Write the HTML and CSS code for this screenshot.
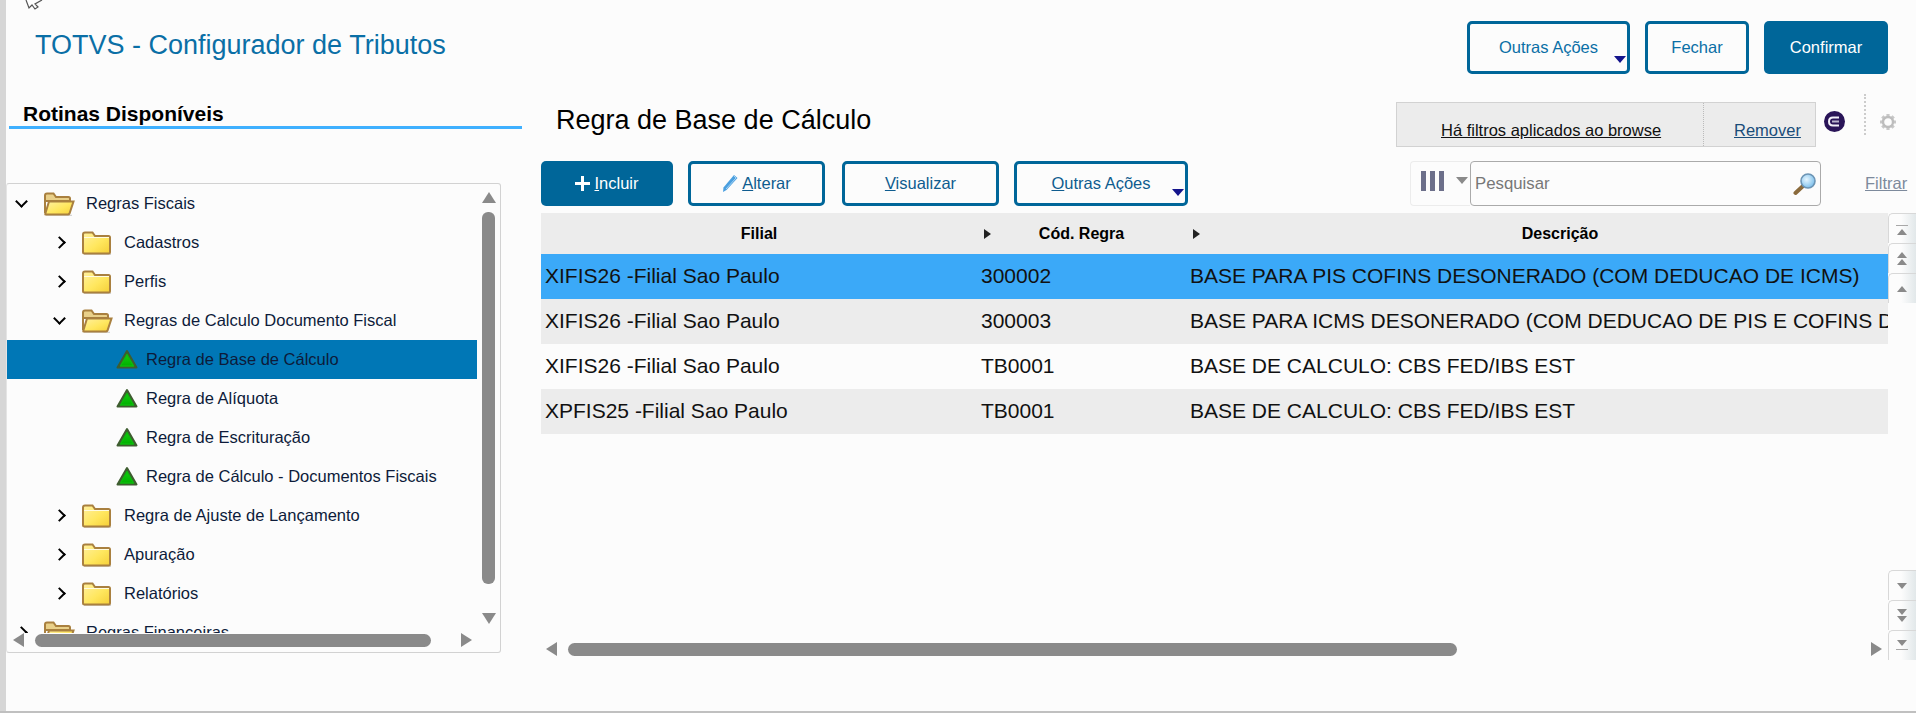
FILE: index.html
```html
<!DOCTYPE html>
<html lang="pt-BR">
<head>
  <meta charset="UTF-8" />
  <title>TOTVS - Configurador de Tributos</title>
  <link rel="stylesheet" href="styles.css">
</head>
<body>
  <svg class="defs" width="0" height="0">
    <defs>
      <linearGradient id="folderFill" x1="0" y1="0" x2="1" y2="1">
        <stop offset="0" stop-color="#fff0a0"/>
        <stop offset="0.55" stop-color="#ffe75e"/>
        <stop offset="1" stop-color="#f5cf38"/>
      </linearGradient>
      <linearGradient id="greenFill" x1="0" y1="0" x2="0" y2="1">
        <stop offset="0" stop-color="#14cc10"/>
        <stop offset="1" stop-color="#00b000"/>
      </linearGradient>
      <radialGradient id="lensFill" cx="0.4" cy="0.4" r="0.7">
        <stop offset="0" stop-color="#e6f6ff"/>
        <stop offset="1" stop-color="#6fb8e8"/>
      </radialGradient>
      <symbol id="folderClosed" viewBox="0 0 32 24">
        <path d="M3 23.500h27" stroke="#d4d4d4" stroke-width="1.500"/>
        <path d="M2 6V3.500Q2 1.500 4 1.500h7.500L14 5h13.500Q29 5 29 6.500V21Q29 22.500 27.500 22.500H3.500Q2 22.500 2 21Z" fill="url(#folderFill)" stroke="#a9803f" stroke-width="2"/>
        <path d="M3 6.500h25" stroke="#fffbe0" stroke-width="1"/>
      </symbol>
      <symbol id="folderOpen" viewBox="0 0 32 24">
        <path d="M3 23.500h26" stroke="#d4d4d4" stroke-width="1.500"/>
        <path d="M2 21V3.500Q2 1.500 4 1.500h6.500L13 5h12.500Q27 5 27 6.500V9H2" fill="#e9d089" stroke="#a9803f" stroke-width="2"/>
        <path d="M6 9.500h24.500L26.500 21.500Q26 22.500 25 22.500H2.500Q2 22.500 2.500 21Z" fill="url(#folderFill)" stroke="#a9803f" stroke-width="2"/>
      </symbol>
      <symbol id="greenTri" viewBox="0 0 22 21">
        <path d="M11 2 20.500 18.500H1.500Z" fill="#3f5d30" stroke="#3f5d30" stroke-width="2" stroke-linejoin="round"/>
        <path d="M11 5.500 17.500 17H4.500Z" fill="url(#greenFill)" stroke="#0cbc0c" stroke-width="1.500" stroke-linejoin="round"/>
      </symbol>
    </defs>
  </svg>

  <svg class="cursor" width="20" height="10" viewBox="0 0 20 10">
    <path d="M1 0 4 8 7 5 10 9 13 7 10 4 17 0" fill="#fff" stroke="#555" stroke-width="1.200"/>
  </svg>

  <div class="app">
    <!-- TOPO -->
    <header class="topbar">
      <h1 class="app-title">TOTVS - Configurador de Tributos</h1>
      <div class="top-actions">
        <button class="btn btn-outline btn-more top-more">Outras Ações<span class="caret"></span></button>
        <button class="btn btn-outline top-close">Fechar</button>
        <button class="btn btn-solid top-ok">Confirmar</button>
      </div>
    </header>

    <div class="content">
      <!-- ROTINAS -->
      <aside class="sidebar">
        <h2 class="side-title">Rotinas Disponíveis</h2>
        <div class="tree">
          <div class="tree-body">
            <ul class="tree-list">
              <li class="node lvl0"><span class="chev chev-down"></span><svg class="folder"><use href="#folderOpen"/></svg>Regras Fiscais</li>
              <li class="node lvl1"><span class="chev"></span><svg class="folder"><use href="#folderClosed"/></svg>Cadastros</li>
              <li class="node lvl1"><span class="chev"></span><svg class="folder"><use href="#folderClosed"/></svg>Perfis</li>
              <li class="node lvl1"><span class="chev chev-down"></span><svg class="folder"><use href="#folderOpen"/></svg>Regras de Calculo Documento Fiscal</li>
              <li class="node lvl2 selected"><svg class="tri"><use href="#greenTri"/></svg>Regra de Base de Cálculo</li>
              <li class="node lvl2"><svg class="tri"><use href="#greenTri"/></svg>Regra de Alíquota</li>
              <li class="node lvl2"><svg class="tri"><use href="#greenTri"/></svg>Regra de Escrituração</li>
              <li class="node lvl2"><svg class="tri"><use href="#greenTri"/></svg>Regra de Cálculo - Documentos Fiscais</li>
              <li class="node lvl1"><span class="chev"></span><svg class="folder"><use href="#folderClosed"/></svg>Regra de Ajuste de Lançamento</li>
              <li class="node lvl1"><span class="chev"></span><svg class="folder"><use href="#folderClosed"/></svg>Apuração</li>
              <li class="node lvl1"><span class="chev"></span><svg class="folder"><use href="#folderClosed"/></svg>Relatórios</li>
              <li class="node lvl0"><span class="chev"></span><svg class="folder"><use href="#folderOpen"/></svg>Regras Financeiras</li>
            </ul>
            <div class="vbar">
              <span class="arr arr-up"></span>
              <span class="vthumb"></span>
              <span class="arr arr-down"></span>
            </div>
          </div>
          <div class="hbar tree-hbar">
            <span class="arr arr-left"></span>
            <span class="hthumb"></span>
            <span class="arr arr-right"></span>
          </div>
        </div>
      </aside>

      <!-- BROWSE -->
      <main class="main">
        <div class="main-head">
          <h2 class="page-title">Regra de Base de Cálculo</h2>
          <div class="filter-info">
            <a class="filter-msg"><span>Há filtros aplicados ao browse</span></a>
            <a class="filter-rem"><span>Remover</span></a>
          </div>
          <svg class="logo-dot" width="21" height="21" viewBox="0 0 21 21">
            <circle cx="10.500" cy="10.500" r="10.500" fill="#2a1558"/>
            <path d="M15 6.500H9Q5 6.500 5 10.500T9 14.500H15" fill="none" stroke="#f2f0f8" stroke-width="2"/>
            <path d="M8 10.500H15" stroke="#b9b4cc" stroke-width="2"/>
          </svg>
          <span class="dots"></span>
          <svg class="gear" width="18" height="18" viewBox="0 0 18 18">
            <path d="M9 1v3M9 14v3M1 9h3M14 9h3M3.300 3.300l2.200 2.200M12.500 12.500l2.200 2.200M14.700 3.300l-2.200 2.200M5.500 12.500l-2.200 2.200" stroke="#c8c8c8" stroke-width="3.200"/>
            <circle cx="9" cy="9" r="5" fill="#fcfcfc" stroke="#bdbdbd" stroke-width="2.400"/>
          </svg>
        </div>

        <div class="toolbar">
          <button class="btn btn-solid tb-add"><span class="plus"></span><span><u>I</u>ncluir</span></button>
          <button class="btn btn-outline tb-edit">
            <svg width="16" height="19" viewBox="0 0 16 19"><path d="M12 1 15.500 4 4.500 16 1 18 1.500 13.500Z" fill="#4a9fdf"/><path d="M12 2 14 4 4 15" fill="none" stroke="#a8d4f4" stroke-width="1"/></svg>
            <span><u>A</u>lterar</span>
          </button>
          <button class="btn btn-outline tb-view"><span><u>V</u>isualizar</span></button>
          <button class="btn btn-outline btn-more tb-more"><span><u>O</u>utras Ações</span><span class="caret"></span></button>

          <div class="searchbar">
            <div class="col-picker">
              <span class="bars"><i></i><i></i><i></i></span>
              <span class="col-caret"></span>
            </div>
            <div class="search">
              <span class="search-ph">Pesquisar</span>
              <svg width="24" height="24" viewBox="0 0 24 24">
                <path d="M10 14 2.500 21" stroke="#8a6a3c" stroke-width="4" stroke-linecap="round"/>
                <circle cx="15" cy="9" r="7" fill="url(#lensFill)" stroke="#6c94b4" stroke-width="1.600"/>
              </svg>
            </div>
            <a class="filter-link">Filtrar</a>
          </div>
        </div>

        <div class="grid-area">
          <div class="grid-wrap">
            <div class="grid-clip">
              <table class="grid">
                <colgroup>
                  <col class="col-a"><col class="col-b"><col class="col-c">
                </colgroup>
                <thead>
                  <tr>
                    <th>Filial</th>
                    <th class="sort">Cód. Regra</th>
                    <th class="sort">Descrição</th>
                  </tr>
                </thead>
                <tbody>
                  <tr class="row-sel">
                    <td>XIFIS26 -Filial Sao Paulo</td>
                    <td>300002</td>
                    <td>BASE PARA PIS COFINS DESONERADO (COM DEDUCAO DE ICMS)</td>
                  </tr>
                  <tr class="row-alt">
                    <td>XIFIS26 -Filial Sao Paulo</td>
                    <td>300003</td>
                    <td>BASE PARA ICMS DESONERADO (COM DEDUCAO DE PIS E COFINS DESONERADO)</td>
                  </tr>
                  <tr>
                    <td>XIFIS26 -Filial Sao Paulo</td>
                    <td>TB0001</td>
                    <td>BASE DE CALCULO: CBS FED/IBS EST</td>
                  </tr>
                  <tr class="row-alt">
                    <td>XPFIS25 -Filial Sao Paulo</td>
                    <td>TB0001</td>
                    <td>BASE DE CALCULO: CBS FED/IBS EST</td>
                  </tr>
                </tbody>
              </table>
            </div>
            <div class="hbar grid-hbar">
              <span class="arr arr-left"></span>
              <span class="hthumb"></span>
              <span class="arr arr-right"></span>
            </div>
          </div>

          <div class="pager">
            <div class="pager-group">
              <div class="page-btn"><span class="line"></span><span class="mini mini-up"></span></div>
              <div class="page-btn"><span class="mini mini-up"></span><span class="mini mini-up"></span></div>
              <div class="page-btn"><span class="mini mini-up"></span></div>
            </div>
            <div class="pager-group">
              <div class="page-btn"><span class="mini mini-down"></span></div>
              <div class="page-btn"><span class="mini mini-down"></span><span class="mini mini-down"></span></div>
              <div class="page-btn"><span class="mini mini-down"></span><span class="line"></span></div>
            </div>
          </div>
        </div>
      </main>
    </div>
  </div>
</body>
</html>
```

FILE: styles.css
```css
* {
  box-sizing: border-box;
}
html, body {
  margin: 0;
  height: 100%;
  overflow: hidden;
}
body {
  font-family: "Liberation Sans", Arial, sans-serif;
  background: #fcfcfc;
  color: #111;
}
.defs {
  position: absolute;
}
.cursor {
  position: absolute;
  left: 25px;
  top: 0;
}
.app {
  height: 711px;
  border-left: 6px solid #d6d6d6;
  display: flex;
  flex-direction: column;
  box-shadow: 0 2px 0 #c0c0c0;
}

/* topo */
.topbar {
  height: 94px;
  display: flex;
  justify-content: space-between;
  padding: 21px 28px 0 29px;
}
.app-title {
  margin: 8px 0 0;
  font-size: 27px;
  font-weight: normal;
  line-height: 32px;
  color: #0a6fa6;
}
.top-actions {
  display: flex;
  gap: 15px;
  height: 53px;
}
.btn {
  position: relative;
  display: flex;
  align-items: center;
  justify-content: center;
  gap: 4px;
  height: 100%;
  padding: 0;
  border-radius: 5px;
  font-family: inherit;
  font-size: 16.500px;
  cursor: pointer;
}
.btn-outline {
  background: #fcfcfc;
  border: 3px solid #006699;
  color: #0a6fa6;
}
.btn-solid {
  background: #006699;
  border: none;
  color: #fff;
}
.top-more { width: 163px; }
.top-close { width: 104px; }
.top-ok { width: 124px; }
.caret {
  position: absolute;
  right: 1px;
  bottom: 8px;
  width: 0;
  height: 0;
  border-left: 6px solid transparent;
  border-right: 6px solid transparent;
  border-top: 7px solid #14148c;
}

.content {
  flex: 1;
  display: flex;
  min-height: 0;
}

/* rotinas */
.sidebar {
  width: 513px;
  margin-left: 3px;
}
.side-title {
  height: 35px;
  margin: 0 0 54px;
  padding: 8px 0 0 14px;
  border-bottom: 3px solid #3fb0ff;
  font-size: 21px;
  line-height: 24px;
  color: #000;
}
.tree {
  width: 495px;
  height: 470px;
  margin-left: -3px;
  border: 1px solid #d2d2d2;
  border-radius: 3px;
  border-left-color: #e4e4e4;
}
.tree-body {
  display: flex;
  height: 449px;
}
.tree-list {
  width: 470px;
  margin: 0;
  padding: 0;
  list-style: none;
  overflow: hidden;
}
.node {
  display: flex;
  align-items: center;
  height: 39px;
  font-size: 16.500px;
  color: #0d1b3a;
  white-space: nowrap;
}
.lvl0 { padding-left: 10px; }
.lvl1 { padding-left: 48px; }
.lvl2 { padding-left: 109px; }
.selected {
  background: #0077b6;
}
.chev {
  width: 9px;
  height: 9px;
  margin-right: 17px;
  border-top: 2.500px solid #000;
  border-right: 2.500px solid #000;
  transform: rotate(45deg);
}
.chev-down {
  transform: translateY(-2px) rotate(135deg);
}
.folder {
  width: 32px;
  height: 24px;
  margin-right: 11px;
  flex-shrink: 0;
}
.tri {
  width: 22px;
  height: 21px;
  margin-right: 8px;
}
.vbar {
  width: 15px;
  margin-left: 4px;
  padding-top: 8px;
  display: flex;
  flex-direction: column;
  align-items: center;
}
.vthumb {
  width: 13px;
  height: 372px;
  margin: 9px 0 29px;
  background: #8a8a8a;
  border-radius: 6px;
}
.hbar {
  display: flex;
  align-items: center;
}
.tree-hbar {
  height: 14px;
  padding-left: 6px;
}
.hthumb {
  height: 13px;
  background: #8a8a8a;
  border-radius: 7px;
}
.tree-hbar .hthumb {
  width: 396px;
  margin: 0 30px 0 11px;
}
.arr {
  width: 0;
  height: 0;
  flex-shrink: 0;
}
.arr-up {
  border-left: 7px solid transparent;
  border-right: 7px solid transparent;
  border-bottom: 11px solid #8a8a8a;
}
.arr-down {
  border-left: 7px solid transparent;
  border-right: 7px solid transparent;
  border-top: 11px solid #8a8a8a;
}
.arr-left {
  border-top: 7px solid transparent;
  border-bottom: 7px solid transparent;
  border-right: 11px solid #8a8a8a;
}
.arr-right {
  border-top: 7px solid transparent;
  border-bottom: 7px solid transparent;
  border-left: 11px solid #8a8a8a;
}

/* browse */
.main {
  width: 1375px;
  margin-left: 19px;
}
.main-head {
  height: 67px;
  display: flex;
  align-items: flex-start;
}
.page-title {
  width: 840px;
  margin: 11px 0 0 15px;
  font-size: 27px;
  font-weight: normal;
  line-height: 30px;
  color: #000;
}
.filter-info {
  display: flex;
  width: 420px;
  height: 45px;
  margin-top: 8px;
  background: #ececec;
  border: 1px solid #d2d2d2;
  font-size: 16.500px;
}
.filter-msg {
  display: flex;
  align-items: flex-end;
  width: 307px;
  padding: 0 0 6px 44px;
  color: #111;
  text-decoration: underline;
  border-right: 1px dotted #bbb;
}
.filter-rem {
  display: flex;
  align-items: flex-end;
  padding: 0 0 6px 30px;
  color: #1a4d7a;
  text-decoration: underline;
}
.logo-dot {
  margin: 17px 0 0 8px;
}
.dots {
  width: 0;
  height: 41px;
  margin-left: 19px;
  border-left: 2px dotted #ccc;
}
.gear {
  margin: 19px 0 0 13px;
}
.toolbar {
  display: flex;
  height: 45px;
  margin-bottom: 7px;
}
.toolbar .btn-outline {
  color: #0f5c8f;
  font-size: 16.500px;
}
.tb-add { width: 132px; margin-right: 15px; }
.tb-edit { width: 137px; margin-right: 17px; }
.tb-view { width: 157px; margin-right: 15px; }
.tb-more { width: 174px; }
.tb-more .caret {
  right: 1px;
  bottom: 7px;
}
.plus {
  position: relative;
  width: 15px;
  height: 15px;
  background:
    linear-gradient(#fff, #fff) center / 15px 3px no-repeat,
    linear-gradient(#fff, #fff) center / 3px 15px no-repeat;
}
.searchbar {
  display: flex;
  margin-left: 222px;
  height: 100%;
}
.col-picker {
  display: flex;
  align-items: center;
  width: 60px;
  padding-left: 10px;
  border: 1px solid #ececec;
  border-right: none;
  border-radius: 4px 0 0 4px;
}
.bars {
  display: flex;
  gap: 4px;
  margin-top: -6px;
}
.bars i {
  width: 5px;
  height: 20px;
  background: #6c6f8a;
}
.col-caret {
  margin: -6px 0 0 12px;
  border-left: 6px solid transparent;
  border-right: 6px solid transparent;
  border-top: 7px solid #8a8a8a;
}
.search {
  display: flex;
  align-items: center;
  justify-content: space-between;
  width: 351px;
  padding: 0 3px 0 4px;
  border: 1px solid #aaa;
  border-radius: 4px;
  background: #fcfcfc;
}
.search-ph {
  font-size: 16.800px;
  color: #777;
}
.filter-link {
  margin-left: 44px;
  align-self: center;
  font-size: 16.500px;
  color: #7d8a9c;
  text-decoration: underline;
}
.grid-area {
  display: flex;
  height: 447px;
}
.grid-wrap {
  width: 1347px;
}
.grid-clip {
  height: 429px;
  overflow: hidden;
}
.grid {
  width: 1393px;
  table-layout: fixed;
  border-collapse: collapse;
}
.col-a { width: 436px; }
.col-b { width: 209px; }
.grid th {
  position: relative;
  height: 41px;
  background: #ececec;
  font-size: 16px;
  color: #000;
}
.sort::before {
  content: "";
  position: absolute;
  left: 7px;
  top: 16px;
  border-top: 5px solid transparent;
  border-bottom: 5px solid transparent;
  border-left: 7px solid #222;
}
.grid td {
  height: 45px;
  padding: 0 0 2px 4px;
  font-size: 21px;
  color: #111;
  white-space: nowrap;
  overflow: hidden;
}
.row-sel td {
  background: #3ba9f8;
}
.row-alt td {
  background: #ececec;
}
.grid-hbar {
  height: 14px;
  padding-left: 5px;
}
.grid-hbar .hthumb {
  width: 889px;
  margin: 0 auto 0 11px;
}
.grid-hbar .arr-right {
  margin-right: 6px;
}
.pager {
  width: 28px;
  display: flex;
  flex-direction: column;
  justify-content: space-between;
}
.page-btn {
  height: 30px;
  display: flex;
  flex-direction: column;
  align-items: center;
  justify-content: center;
  gap: 1px;
  padding-right: 1px;
  border: 1px solid #d8d8d8;
  border-right: none;
  border-bottom: none;
  border-radius: 5px 0 0 0;
  background: linear-gradient(to right, #fcfcfc 45%, #e2e8ea);
}
.mini {
  width: 0;
  height: 0;
  border-left: 5px solid transparent;
  border-right: 5px solid transparent;
}
.mini-up {
  border-bottom: 6px solid #8a8a8a;
}
.mini-down {
  border-top: 6px solid #8a8a8a;
}
.line {
  width: 12px;
  height: 1px;
  margin: 2px 0;
  background: #a8a8a8;
}
```
